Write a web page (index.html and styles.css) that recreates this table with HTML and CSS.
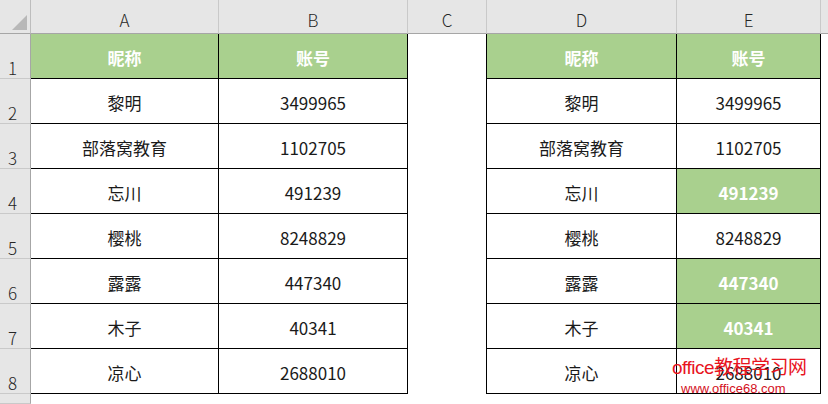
FILE: index.html
```html
<!DOCTYPE html>
<html lang="zh-CN">
<head>
<meta charset="utf-8">
<title>Sheet</title>
<link rel="stylesheet" href="styles.css">
</head>
<body>
<div class="sheet">
  <div class="corner"><span class="tri"></span></div>
  <div class="colh">A</div>
  <div class="colh">B</div>
  <div class="colh">C</div>
  <div class="colh">D</div>
  <div class="colh">E</div>
  <div class="colh last"></div>

  <div class="rowh">1</div>
  <div class="cell head">昵称</div>
  <div class="cell head">账号</div>
  <div class="cell gap"></div>
  <div class="cell head">昵称</div>
  <div class="cell head">账号</div>
  <div class="cell blank"></div>

  <div class="rowh">2</div>
  <div class="cell">黎明</div>
  <div class="cell">3499965</div>
  <div class="cell gap"></div>
  <div class="cell">黎明</div>
  <div class="cell">3499965</div>
  <div class="cell blank"></div>

  <div class="rowh">3</div>
  <div class="cell">部落窝教育</div>
  <div class="cell">1102705</div>
  <div class="cell gap"></div>
  <div class="cell">部落窝教育</div>
  <div class="cell">1102705</div>
  <div class="cell blank"></div>

  <div class="rowh">4</div>
  <div class="cell">忘川</div>
  <div class="cell">491239</div>
  <div class="cell gap"></div>
  <div class="cell">忘川</div>
  <div class="cell hit">491239</div>
  <div class="cell blank"></div>

  <div class="rowh">5</div>
  <div class="cell">樱桃</div>
  <div class="cell">8248829</div>
  <div class="cell gap"></div>
  <div class="cell">樱桃</div>
  <div class="cell">8248829</div>
  <div class="cell blank"></div>

  <div class="rowh">6</div>
  <div class="cell">露露</div>
  <div class="cell">447340</div>
  <div class="cell gap"></div>
  <div class="cell">露露</div>
  <div class="cell hit">447340</div>
  <div class="cell blank"></div>

  <div class="rowh">7</div>
  <div class="cell">木子</div>
  <div class="cell">40341</div>
  <div class="cell gap"></div>
  <div class="cell">木子</div>
  <div class="cell hit">40341</div>
  <div class="cell blank"></div>

  <div class="rowh">8</div>
  <div class="cell">凉心</div>
  <div class="cell">2688010</div>
  <div class="cell gap"></div>
  <div class="cell">凉心</div>
  <div class="cell wm-host">2688010
    <div class="watermark">
      <div class="wm-title">office教程学习网</div>
      <div class="wm-url">www.office68.com</div>
    </div>
  </div>
  <div class="cell blank"></div>

  <div class="rowh"></div>
  <div class="cell blank"></div>
  <div class="cell blank"></div>
  <div class="cell blank"></div>
  <div class="cell blank"></div>
  <div class="cell blank"></div>
  <div class="cell blank"></div>
</div>
</body>
</html>
```

FILE: styles.css
```css
html, body {
  margin: 0;
  padding: 0;
  background: #ffffff;
  overflow: hidden;
}

.sheet {
  width: 828px;
  height: 404px;
  display: grid;
  grid-template-columns: 31px 188px 189px 79px 190px 144px 7px;
  grid-template-rows: 34px repeat(8, 45px) 1fr;
  font-family: "Noto Sans CJK SC", "Microsoft YaHei", sans-serif;
  font-size: 17px;
  color: #1a1a1a;
  overflow: hidden;
}

.sheet > div {
  box-sizing: border-box;
}

.corner {
  background: #e6e6e6;
  border-right: 1px solid #bdbdbd;
  border-bottom: 1px solid #a6a6a6;
  position: relative;
}

.tri {
  position: absolute;
  left: 12px;
  top: 15px;
  width: 0;
  height: 0;
  border-left: 15px solid transparent;
  border-bottom: 15px solid #b8b8b8;
}

.colh {
  background: #e6e6e6;
  border-right: 1px solid #c9c9c9;
  border-bottom: 1px solid #a6a6a6;
  display: flex;
  align-items: flex-end;
  justify-content: center;
  padding-bottom: 1px;
  font-size: 17px;
  font-weight: 300;
  color: #262626;
}

.colh.last {
  border-right: none;
}

.rowh {
  background: #e6e6e6;
  border-right: 1px solid #a6a6a6;
  border-bottom: 1px solid #c9c9c9;
  display: flex;
  align-items: flex-end;
  padding-left: 8px;
  font-size: 17px;
  font-weight: 300;
  color: #262626;
  line-height: 20px;
}

.cell {
  border-right: 1px solid #000;
  border-bottom: 1px solid #000;
  display: flex;
  align-items: center;
  justify-content: center;
  padding-top: 2px;
  white-space: nowrap;
}

.cell.gap {
  border-bottom: none;
}

.cell.blank {
  border: none;
}

.head,
.hit {
  background: #a9d08e;
  color: #ffffff;
  font-weight: 700;
}

.wm-host {
  position: relative;
}

.watermark {
  position: absolute;
  left: -5px;
  top: 9px;
  width: 150px;
  font-family: "Liberation Sans", Arial, "Noto Sans CJK SC", sans-serif;
  color: #e8141e;
  line-height: 1;
  white-space: nowrap;
}

.wm-title {
  font-size: 19px;
  letter-spacing: -0.5px;
}

.wm-url {
  font-size: 13px;
  margin-top: 5px;
  margin-left: 9px;
  color: #d4101c;
}
```
